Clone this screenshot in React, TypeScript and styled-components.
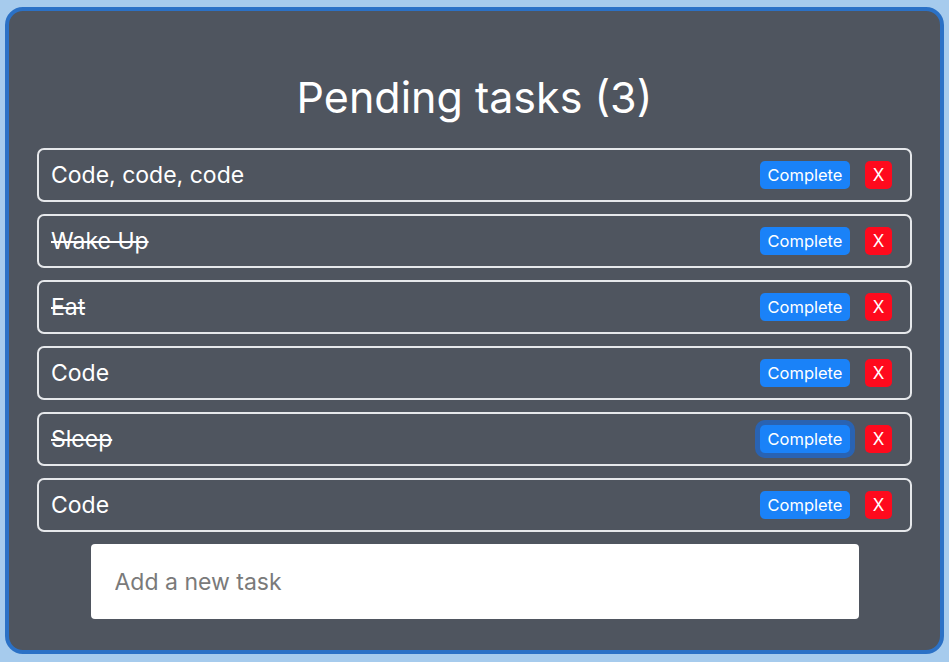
import React from "react";
import styled, { createGlobalStyle } from "styled-components";

const Global = createGlobalStyle`
  html, body { margin: 0; padding: 0; background: #a6cbed; }
  body { font-family: Inter, "Noto Sans", sans-serif; }
  * { box-sizing: border-box; }
`;

const Page = styled.div`
  padding: 7px 5px 8px 5px;
`;

const Card = styled.div`
  background: #4f555f;
  border: 4px solid #2b71c6;
  border-radius: 18px;
  height: 647px;
  padding: 0 28px;
  display: flex;
  flex-direction: column;
  align-items: center;
`;

const Title = styled.h1`
  margin: 60px 0 0;
  height: 77px;
  font-weight: 400;
  font-size: 43px;
  line-height: 52px;
  color: #ffffff;
`;

const List = styled.div`
  width: 100%;
  display: flex;
  flex-direction: column;
  gap: 12px;
`;

const Row = styled.div`
  height: 54px;
  border: 2px solid #e6e8eb;
  border-radius: 7px;
  display: flex;
  align-items: center;
  padding: 0 18px 0 12px;
`;

const Label = styled.span<{ $done: boolean }>`
  flex: 1;
  font-size: 23px;
  color: #ffffff;
  text-decoration: ${(p) => (p.$done ? "line-through" : "none")};
  text-decoration-thickness: 1.5px;
`;

const CompleteBtn = styled.button<{ $focused?: boolean }>`
  width: 90px;
  height: 28px;
  border: none;
  border-radius: 5px;
  background: #1a82f8;
  color: #ffffff;
  font-family: Inter, "Noto Sans", sans-serif;
  font-size: 16.5px;
  padding: 0;
  margin-right: 15px;
  box-shadow: ${(p) => (p.$focused ? "0 0 0 5px rgba(25, 105, 215, 0.7)" : "none")};
`;

const DeleteBtn = styled.button`
  width: 27px;
  height: 28px;
  border: none;
  border-radius: 5px;
  background: #ff0a1d;
  color: #ffffff;
  font-family: Inter, "Noto Sans", sans-serif;
  font-size: 17px;
  padding: 0;
`;

const Input = styled.input`
  margin-top: 12px;
  width: 768px;
  height: 75px;
  border: none;
  border-radius: 4px;
  background: #ffffff;
  padding: 0 24px;
  font-family: Inter, "Noto Sans", sans-serif;
  font-size: 23px;
  outline: none;
  &::placeholder { color: #7a7a7a; }
`;

const tasks = [
  { text: "Code, code, code", done: false },
  { text: "Wake Up", done: true },
  { text: "Eat", done: true },
  { text: "Code", done: false },
  { text: "Sleep", done: true, focused: true },
  { text: "Code", done: false },
];

export default function App() {
  return (
    <Page>
      <Global />
      <Card>
        <Title>Pending tasks (3)</Title>
        <List>
          {tasks.map((t, i) => (
            <Row key={i}>
              <Label $done={t.done}>{t.text}</Label>
              <CompleteBtn $focused={t.focused}>Complete</CompleteBtn>
              <DeleteBtn>X</DeleteBtn>
            </Row>
          ))}
        </List>
        <Input placeholder="Add a new task" />
      </Card>
    </Page>
  );
}
